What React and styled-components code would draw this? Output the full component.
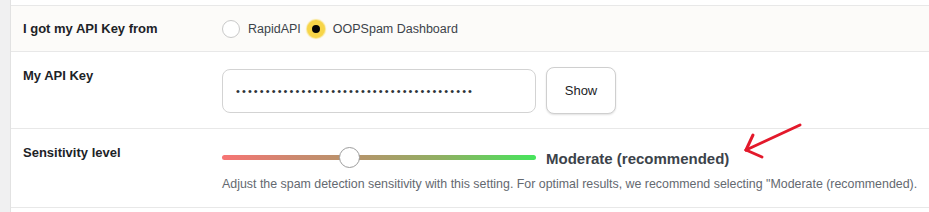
import React from 'react'
import styled, { createGlobalStyle } from 'styled-components'

const GlobalStyle = createGlobalStyle`
    html, body {
        margin: 0;
        padding: 0;
        background: #f0f0f1;
    }
    body {
        font-family: "Liberation Sans", Arial, sans-serif;
        -webkit-font-smoothing: antialiased;
    }
`

const Page = styled.div`
    display: flex;
    height: 212px;
    padding-left: 10px;
`

const Panel = styled.div`
    position: relative;
    flex: 1;
    background: #ffffff;
    border-left: 1px solid #e2e2e2;
    padding-top: 5px;
`

const Row = styled.div`
    display: grid;
    grid-template-columns: 199px 1fr;
    align-items: ${props => (props.center ? 'center' : 'start')};
    min-height: ${props => props.height}px;
    box-sizing: border-box;
    padding: ${props => props.pad || '0'} 0 0 12px;
    background: ${props => (props.tint ? '#fcfbf9' : '#ffffff')};
    border-top: ${props => (props.first ? '1px solid #e8e8e8' : 'none')};
    border-bottom: 1px solid #e8e8e8;
`

const Label = styled.div`
    font-size: 13px;
    font-weight: 700;
    color: #1d2327;
    line-height: 18px;
`

const RadioGroup = styled.div`
    display: flex;
    align-items: center;
    padding-top: 1px;
`

const RadioItem = styled.label`
    display: flex;
    align-items: center;
    margin-right: 6px;
    font-size: 12.5px;
    color: #3c434a;
`

const RadioDot = styled.span`
    width: 18px;
    height: 18px;
    box-sizing: border-box;
    border-radius: 50%;
    margin-right: 8px;
    background: ${props => (props.selected ? '#050505' : '#ffffff')};
    border: ${props => (props.selected ? '5px solid #f7d548' : '1px solid #c9c9c9')};
    box-shadow: ${props => (props.selected ? '0 0 1px 1px rgba(247, 213, 72, 0.6)' : 'none')};
`

const KeyRow = styled.div`
    display: flex;
    align-items: center;
    gap: 10px;
`

const KeyInput = styled.input`
    width: 314px;
    height: 44px;
    box-sizing: border-box;
    border: 1px solid #d3d3d3;
    border-radius: 8px;
    padding: 0 13px;
    font-size: 11px;
    letter-spacing: 2.1px;
    color: #2c3338;
    background: #ffffff;
    outline: none;
`

const ShowButton = styled.button`
    width: 70px;
    height: 47px;
    border: 1px solid #cfcfcf;
    border-radius: 8px;
    background: #ffffff;
    box-shadow: 0 1px 2px rgba(0, 0, 0, 0.12);
    font-family: inherit;
    font-size: 13px;
    font-weight: 400;
    color: #1d2327;
    cursor: pointer;
`

const SliderLine = styled.div`
    display: flex;
    align-items: center;
    gap: 10px;
    padding-top: 4px;
`

const Track = styled.div`
    position: relative;
    width: 314px;
    height: 5px;
    border-radius: 3px;
    background: linear-gradient(to right, #f77474 0%, #c98a6e 25%, #b3966a 45%, #8fb062 70%, #46e55c 100%);
`

const Thumb = styled.div`
    position: absolute;
    top: 50%;
    width: 21px;
    height: 21px;
    box-sizing: border-box;
    margin-top: -10.5px;
    margin-left: -10.5px;
    border-radius: 50%;
    border: 1px solid #9c9c9c;
    background: #ffffff;
`

const LevelText = styled.div`
    font-size: 15px;
    font-weight: 700;
    color: #3c434a;
    padding-top: 2px;
`

const Description = styled.p`
    margin: 10px 0 0;
    font-size: 12.4px;
    color: #646970;
    white-space: nowrap;
`

const Arrow = styled.svg`
    position: absolute;
    left: 724px;
    top: 118px;
    overflow: visible;
`

function App() {
    const level = 0.406

    return (
        <>
            <GlobalStyle />
            <Page>
                <Panel>
                    <Row first tint center height={47}>
                        <Label>I got my API Key from</Label>
                        <RadioGroup>
                            <RadioItem>
                                <RadioDot />
                                RapidAPI
                            </RadioItem>
                            <RadioItem>
                                <RadioDot selected />
                                OOPSpam Dashboard
                            </RadioItem>
                        </RadioGroup>
                    </Row>
                    <Row height={77} pad="15px">
                        <Label>My API Key</Label>
                        <KeyRow>
                            <KeyInput type="password" readOnly value="xxxxxxxxxxxxxxxxxxxxxxxxxxxxxxxxxxxxxxxx" />
                            <ShowButton>Show</ShowButton>
                        </KeyRow>
                    </Row>
                    <Row height={79} pad="15px">
                        <Label>Sensitivity level</Label>
                        <div>
                            <SliderLine>
                                <Track>
                                    <Thumb style={{ left: `${level * 100}%` }} />
                                </Track>
                                <LevelText>Moderate (recommended)</LevelText>
                            </SliderLine>
                            <Description>
                                Adjust the spam detection sensitivity with this setting. For optimal results, we recommend selecting "Moderate (recommended).
                            </Description>
                        </div>
                    </Row>
                    <Arrow width="70" height="45" viewBox="0 0 70 45">
                        <g stroke="#e3192b" strokeWidth="3" strokeLinecap="round" fill="none">
                            <path d="M65 7 L11 32" />
                            <path d="M11 32 L18 17" />
                            <path d="M11 32 L27 39" />
                        </g>
                    </Arrow>
                </Panel>
            </Page>
        </>
    )
}

export default App
